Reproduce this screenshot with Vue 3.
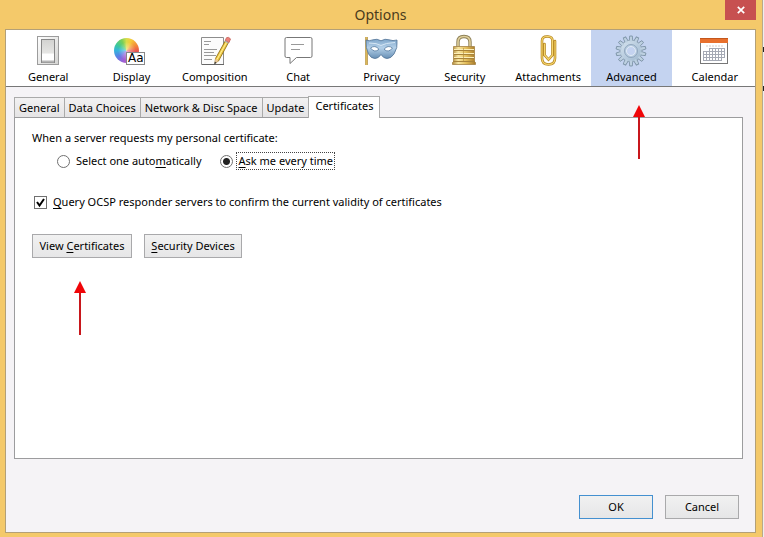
<script setup>
import { ref } from 'vue'

const sections = ['General', 'Display', 'Composition', 'Chat', 'Privacy', 'Security', 'Attachments', 'Advanced', 'Calendar']
const section = ref('Advanced')
const tabs = ['General', 'Data Choices', 'Network & Disc Space', 'Update', 'Certificates']
const tab = ref('Certificates')
const choice = ref('ask')
const ocsp = ref(true)
const teeth = Array.from({ length: 14 }, (_, i) => (i * 360) / 14)
</script>

<template>
  <div class="desktop">
    <main class="window">
      <header class="titlebar">
        <h1>Options</h1>
        <button class="close" type="button" aria-label="Close">
          <svg width="8" height="8" viewBox="0 0 8 8" aria-hidden="true"><path d="M.8.8 7.2 7.2M7.2.8.8 7.2" stroke="#fff" stroke-width="1.7" /></svg>
        </button>
      </header>

      <div class="dialog">
        <nav class="toolbar">
          <button
            v-for="name in sections"
            :key="name"
            type="button"
            class="section"
            :class="{ active: name === section }"
            @click="section = name"
          >
            <svg v-if="name === 'General'" width="32" height="32" viewBox="0 0 32 32" aria-hidden="true">
              <defs>
                <linearGradient id="plate" x2="1" y2="1"><stop stop-color="#fff" /><stop offset="1" stop-color="#d4d4d2" /></linearGradient>
                <linearGradient id="rocker" x2="0" y2="1"><stop stop-color="#d2d2d0" /><stop offset=".6" stop-color="#e6e6e4" /><stop offset=".62" stop-color="#fff" /><stop offset="1" stop-color="#fff" /></linearGradient>
              </defs>
              <rect x="5.500" y="1.500" width="21" height="28" fill="url(#plate)" stroke="#9c9c9c" />
              <rect x="9.500" y="4.500" width="13" height="23" fill="url(#rocker)" stroke="#888" />
              <path d="M10 26.500h12" stroke="#b5b5b5" stroke-width="2" />
            </svg>

            <svg v-else-if="name === 'Display'" width="32" height="32" viewBox="0 0 32 32" aria-hidden="true">
              <defs>
                <radialGradient id="hub"><stop stop-color="#fff" stop-opacity=".5" /><stop offset="1" stop-color="#fff" stop-opacity="0" /></radialGradient>
              </defs>
              <foreignObject x="-1" y="3" width="26" height="26"><div class="wheel"></div></foreignObject>
              <circle cx="12" cy="16" r="9" fill="url(#hub)" />
              <rect x="11.500" y="17.500" width="18" height="12" fill="#fff" stroke="#888" />
              <text x="13" y="27" class="sample">Aa</text>
            </svg>

            <svg v-else-if="name === 'Composition'" width="32" height="32" viewBox="0 0 32 32" aria-hidden="true">
              <path d="M2.500 2.500h22v27h-22z" fill="#fcfcfc" stroke="#8d8d8d" />
              <path d="M3 29.500h22" stroke="#666" />
              <path d="M5 6.500h7M5 9.500h5M5 14.500h13M5 17.500h10M5 20.500h12M5 24.500h8" stroke="#999" />
              <path d="m26.500 5.500 3 2L19.500 26l-3.500 2 .5-4.500z" fill="#f1cb45" stroke="#917019" stroke-width=".9" />
              <path d="m28 6.500-10 18" stroke="#fff09a" />
              <path d="m16.500 23.500 3 2.500-3.800 2.500z" fill="#e7c59b" />
              <path d="m16 26.500-1 3 2.500-1.500z" fill="#333" />
              <path d="m26.200 5.500 1.300-2.800q2-1.200 4 1.200L30 7.700z" fill="#ec8078" stroke="#c45f58" stroke-width=".8" />
              <path d="m26 6 3.300 2" stroke="#aaa" stroke-width="1.200" />
            </svg>

            <svg v-else-if="name === 'Chat'" width="32" height="32" viewBox="0 0 32 32" aria-hidden="true">
              <path d="M3 4q0-1.500 1.500-1.500h24q1.500 0 1.500 1.500v17q0 1.500-1.500 1.500H14.500L8 28.500v-6H4.500Q3 22.500 3 21z" fill="#fff" stroke="#777" />
              <path d="M9 9.500h13M9 14.500h9" stroke="#999" />
            </svg>

            <svg v-else-if="name === 'Privacy'" width="32" height="32" viewBox="0 0 32 32" aria-hidden="true">
              <defs><linearGradient id="mask" x2="0" y2="1"><stop stop-color="#7fa6ca" /><stop offset=".45" stop-color="#b4d0e8" /><stop offset="1" stop-color="#678fb5" /></linearGradient></defs>
              <path d="M1.500 2v28" stroke="#a87e25" stroke-width="2.400" />
              <path d="M1.300 2v28" stroke="#e8c765" />
              <path d="M1 5q3 1.500 7-.2 4-1.600 8 1 4-2.600 8-1 4 1.500 8 .2 1 8-3 14-3 4.500-7 4.500-3.500 0-6-4-2.500 4-6 4-4 0-6.500-4.500Q.5 13 1 5z" fill="url(#mask)" stroke="#527497" stroke-width=".8" />
              <path d="M4 8q8 0 12 2.500Q20 8 30 7.500" fill="none" stroke="#d5e6f4" />
              <path d="M5.500 13q4.500-3.500 8.500 1.300-4.500 4-8.500-1.300zM27.500 13q-4.500-3.500-8.500 1.300 4.500 4 8.500-1.300z" fill="#fff" stroke="#547aa0" stroke-width=".8" />
            </svg>

            <svg v-else-if="name === 'Security'" width="32" height="32" viewBox="0 0 32 32" aria-hidden="true">
              <defs><linearGradient id="brass"><stop stop-color="#b08a3c" /><stop offset=".25" stop-color="#f8e6a0" /><stop offset=".6" stop-color="#e2bc58" /><stop offset="1" stop-color="#a87a2b" /></linearGradient></defs>
              <path d="M9 12V7q0-5.500 6-5.500T21 7v5" fill="none" stroke="#8e8158" stroke-width="3.400" />
              <path d="M9 12V7q0-5.500 6-5.500T21 7v5" fill="none" stroke="#e0d09c" stroke-width="1.600" />
              <path d="M4.500 11.500h21v15l1 1v2h-23v-2l1-1z" fill="url(#brass)" stroke="#a58345" stroke-width=".8" />
              <path d="M5 15.500h20M5 19.500h20M5 23.500h20M4 26.500h22" stroke="#a8833a" />
              <path d="M5 14.500h20M5 18.500h20M5 22.500h20" stroke="#fbeeb9" />
              <path d="M14.500 13v13" stroke="#b08a37" stroke-opacity=".6" />
            </svg>

            <svg v-else-if="name === 'Attachments'" width="32" height="32" viewBox="0 0 32 32" aria-hidden="true">
              <path d="M12.500 9v11l4 4.500 4-4.500V6q0-4.500-4.500-4.500h-1Q10 1.500 10 6v17q0 6.500 6.500 6.500T23 23V6" fill="none" stroke="#b5841f" stroke-width="2.600" stroke-linecap="round" />
              <path d="M12.500 9v11l4 4.500 4-4.500V6q0-4.500-4.500-4.500h-1Q10 1.500 10 6v17q0 6.500 6.500 6.500T23 23V6" fill="none" stroke="#f5d66c" stroke-width="1.200" stroke-linecap="round" />
            </svg>

            <svg v-else-if="name === 'Advanced'" width="32" height="32" viewBox="0 0 32 32" aria-hidden="true">
              <defs><linearGradient id="steel" x2="1" y2="1"><stop stop-color="#d8e5ef" /><stop offset=".5" stop-color="#b9cddf" /><stop offset="1" stop-color="#9db6cc" /></linearGradient></defs>
              <g fill="#b9cddd" stroke="#7e94a8" stroke-width=".9">
                <path v-for="angle in teeth" :key="angle" d="M14.300 5.500 14.700 1h2.600l.4 4.500z" :transform="`rotate(${angle} 16 16)`" />
              </g>
              <circle cx="16" cy="16" r="11" fill="url(#steel)" stroke="#8b9fb3" stroke-width=".8" />
              <g fill="#bdd0e1"><path v-for="angle in teeth" :key="angle" d="M14.800 6.500 15.200 2h1.600l.4 4.500z" :transform="`rotate(${angle} 16 16)`" /></g>
              <circle cx="16" cy="16" r="6.500" fill="#b7cbe0" stroke="#879db4" stroke-width=".8" />
              <circle cx="16" cy="16" r="4.500" fill="#c4d3f0" stroke="#e1ebf5" />
            </svg>

            <svg v-else width="32" height="32" viewBox="0 0 32 32" aria-hidden="true">
              <rect x="1.500" y="3.500" width="27" height="25" fill="#fff" stroke="#777" />
              <path d="M1 3h28v5H1z" fill="#e8702d" />
              <path d="M1 3.500h28" stroke="#c4571c" />
              <path d="M7 11h17" stroke="#d5cfcc" stroke-dasharray="2 1" />
              <path d="M10 13.500h15M4 16.500h21M4 19.500h21M4 22.500h21M4 25.500h18M4.500 16v10M7.500 16v10M10.500 13v13M13.500 13v13M16.500 13v13M19.500 13v13M22.500 13v13M25.500 13v10" stroke="#a5a9b4" />
            </svg>
            <span>{{ name }}</span>
          </button>
        </nav>

        <div class="content">
          <div class="tabs" role="tablist">
            <button
              v-for="name in tabs"
              :key="name"
              type="button"
              role="tab"
              class="tab"
              :aria-selected="name === tab"
              @click="tab = name"
            >{{ name }}</button>
          </div>

          <section class="panel" role="tabpanel">
            <fieldset>
              <legend>When a server requests my personal certificate:</legend>
              <div class="choices">
                <label><input v-model="choice" type="radio" name="certificate" value="auto" /><span class="caption">Select one auto<u>m</u>atically</span></label>
                <label><input v-model="choice" type="radio" name="certificate" value="ask" /><span class="caption">
                  <u>A</u>sk me every time</span></label>
              </div>
            </fieldset>
            <label class="check">
              <span class="box">
                <input v-model="ocsp" type="checkbox" />
                <svg v-if="ocsp" width="13" height="13" viewBox="0 0 13 13" aria-hidden="true"><path d="m3 6 2.500 3.500L10 3" fill="none" stroke="#000" stroke-width="2" /></svg>
              </span>
              <span><u>Q</u>uery OCSP responder servers to confirm the current validity of certificates</span>
            </label>
            <div class="actions">
              <button type="button" class="push view">View <u>C</u>ertificates</button>
              <button type="button" class="push devices"><u>S</u>ecurity Devices</button>
            </div>
          </section>

          <footer>
            <button type="button" class="push ok">OK</button>
            <button type="button" class="push cancel">Cancel</button>
          </footer>
        </div>
      </div>
    </main>

    <aside class="edge" aria-hidden="true"><i></i><i></i></aside>

    <svg class="arrow arrow-advanced" width="14" height="56" viewBox="0 0 14 56" aria-hidden="true"><path d="M7 10v45" stroke="#c8171c" stroke-width="2" /><path d="M7 1 13 13H1z" fill="#f00508" /></svg>
    <svg class="arrow arrow-view" width="14" height="56" viewBox="0 0 14 56" aria-hidden="true"><path d="M7 10v45" stroke="#c8171c" stroke-width="2" /><path d="M7 1 13 13H1z" fill="#f00508" /></svg>
  </div>
</template>

<style>
body {
  margin: 0;
}
</style>

<style scoped>
* {
  box-sizing: border-box;
}

.desktop {
  position: relative;
  display: flex;
  min-height: 100vh;
  color: #000;
  font: 11px/16px "Noto Sans", "Open Sans", sans-serif;
}

button {
  margin: 0;
  color: inherit;
  font: inherit;
  white-space: nowrap;
}

.window {
  display: flex;
  flex: 1;
  flex-direction: column;
  padding: 0 6px 4px 5px;
  background: #f4c96a;
}

.titlebar {
  display: grid;
  grid-template-columns: 1fr auto 1fr;
  height: 29px;
}

h1 {
  grid-column: 2;
  margin: 0;
  color: #4a3b1c;
  font-size: 14px;
  font-weight: 400;
  line-height: 30px;
}

.close {
  display: grid;
  place-items: center;
  justify-self: end;
  width: 31px;
  height: 20px;
  padding: 0;
  border: 0;
  background: #c75050;
}

.dialog {
  display: flex;
  flex: 1;
  flex-direction: column;
  border: 1px solid #b3a077;
  background: #f5f3f6;
}

.toolbar {
  display: grid;
  grid-template-columns: repeat(9, 1fr);
  gap: 3px;
  padding-left: 2px;
  border-bottom: 1px solid #777;
  background: #fff;
}

.section {
  display: flex;
  flex-direction: column;
  align-items: center;
  gap: 2px;
  min-width: 0;
  padding: 5px 0 1px;
  border: 0;
  background: none;
}

.section.active {
  background: #c4d3f0;
}

.section svg {
  overflow: visible;
}

.wheel {
  width: 25px;
  height: 25px;
  border-radius: 50%;
  background: conic-gradient(#d8dc4a, #f5c93a 25deg, #f2843c 65deg, #e8504c 95deg, #d458b0 150deg, #9a62d8 200deg, #5a80e6 235deg, #35b4dc 270deg, #3cc89a 300deg, #78cf58 335deg, #d8dc4a);
}

.sample {
  font: 12px "DejaVu Sans", sans-serif;
}

.content {
  display: flex;
  flex: 1;
  flex-direction: column;
  padding: 9px 12px 13px 8px;
}

.tabs {
  display: flex;
  align-items: flex-end;
}

.tab {
  height: 20px;
  padding: 0 4px;
  border: 1px solid #aaa;
  border-right-width: 0;
  border-bottom: 0;
  background: linear-gradient(#f2f1f2, #e5e4e5);
}

.tab[aria-selected="true"] {
  z-index: 1;
  height: 22px;
  margin-bottom: -1px;
  padding: 0 6px 3px;
  border-right-width: 1px;
  background: #fff;
}

.panel {
  flex: 1;
  padding: 12px 17px;
  border: 1px solid #9c9c9e;
  background: #fff;
}

fieldset {
  margin: 0;
  padding: 0;
  border: 0;
}

legend {
  padding: 0;
}

.choices {
  display: flex;
  gap: 16px;
  margin: 6px 0 0 25px;
}

label {
  display: flex;
  align-items: center;
}

input {
  flex: none;
  width: 13px;
  height: 13px;
  margin: 0;
  border: 1px solid #707070;
  background: #fff;
  appearance: none;
}

input[type="radio"] {
  margin-right: 3px;
  border-radius: 50%;
}

input[type="radio"]:checked {
  background: radial-gradient(circle, #222 0 3px, #fff 4px);
}

.caption {
  padding: 0 1px 0 2px;
  border: 1px dotted transparent;
}

input:checked + .caption {
  border-color: #444;
}

u {
  text-underline-offset: 2px;
}

.check {
  gap: 6px;
  margin: 24px 0 0 2px;
}

.box {
  display: grid;
}

.box > * {
  grid-area: 1 / 1;
}

.box svg {
  pointer-events: none;
}

.actions {
  display: flex;
  gap: 12px;
  margin-top: 24px;
}

.push {
  height: 24px;
  padding: 0 5px;
  border: 1px solid #a9a9ab;
  background: linear-gradient(#f1f1f1, #e6e6e7);
}

.view {
  min-width: 100px;
}

.devices {
  min-width: 98px;
}

footer {
  display: flex;
  justify-content: flex-end;
  gap: 12px;
  padding: 36px 4px 0 0;
}

footer .push {
  min-width: 74px;
}

.push.ok {
  border-color: #4490d0;
}

.edge {
  display: flex;
  flex-direction: column;
  gap: 38px;
  width: 2px;
  padding-top: 47px;
  border-left: 1px solid #b9a98a;
  background: #eee;
}

.edge i {
  height: 5px;
  background: #222;
}

.edge i + i {
  margin-top: -4px;
}

.arrow {
  position: absolute;
  pointer-events: none;
}

.arrow-advanced {
  top: 104px;
  left: 632px;
}

.arrow-view {
  top: 280px;
  left: 73px;
}
</style>
